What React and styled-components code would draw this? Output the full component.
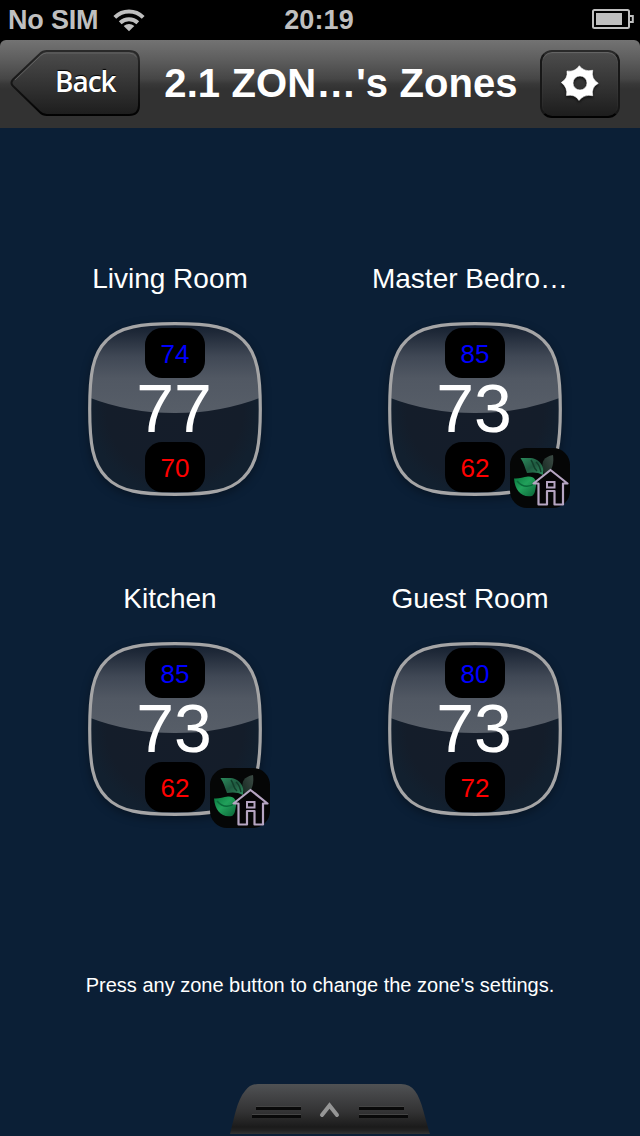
import React from 'react';
import styled, { createGlobalStyle } from 'styled-components';

const zones = [
  { name: 'Living Room', cool: 74, current: 77, heat: 70 },
  { name: 'Master Bedro…', cool: 85, current: 73, heat: 62, eco: true },
  { name: 'Kitchen', cool: 85, current: 73, heat: 62, eco: true },
  { name: 'Guest Room', cool: 80, current: 73, heat: 72 },
];

const TILE =
  'M87 1.7C121 1.7 142 4.5 155.5 18.5C169.5 32 172.3 53 172.3 87C172.3 121 169.5 142 155.5 155.5C142 169.5 121 172.3 87 172.3C53 172.3 32 169.5 18.5 155.5C4.5 142 1.7 121 1.7 87C1.7 53 4.5 32 18.5 18.5C32 4.5 53 1.7 87 1.7Z';

const WifiIcon = () => (
  <svg width="32" height="24" viewBox="0 0 32 24" fill="none" stroke="#bfbfbf" strokeWidth="4">
    <path d="M1.8 9.4C9.8 1.6 22.2 1.6 30.2 9.4" />
    <path d="M7.2 14.8C12.2 10.2 19.8 10.2 24.8 14.8" />
    <path d="M16 23.2L10.7 18C13.8 15.2 18.2 15.2 21.3 18Z" fill="#bfbfbf" stroke="none" />
  </svg>
);

const BatteryIcon = () => (
  <svg width="42" height="20" viewBox="0 0 42 20" fill="none" stroke="#bfbfbf" strokeWidth="2">
    <rect x="1" y="1" width="36" height="18" rx="1.5" />
    <path d="M38 7h2.8v6H38" />
    <rect x="4" y="4" width="26" height="12" fill="#bfbfbf" stroke="none" />
  </svg>
);

const BackShape = () => (
  <svg width="131" height="66" viewBox="0 0 132 66" preserveAspectRatio="none" fill="none">
    <defs>
      <linearGradient id="backFill" x1="0" y1="0" x2="0" y2="1">
        <stop offset="0" stopColor="#4c4c4c" />
        <stop offset="1" stopColor="#1d1d1d" />
      </linearGradient>
      <linearGradient id="backEdge" x1="0" y1="0" x2="0" y2="1">
        <stop offset="0" stopColor="#292929" />
        <stop offset="1" stopColor="#020202" />
      </linearGradient>
    </defs>
    <path
      d="M38 1H121Q131 1 131 11V55Q131 65 121 65H38Q34 65 31 62L4 36Q1 33 4 29.500L31 4Q34 1 38 1Z"
      fill="url(#backFill)"
      stroke="url(#backEdge)"
      strokeWidth="2"
    />
    <path d="M6 30L32 5.500Q35 3 38 3H121Q126 3 128.500 7" stroke="#707070" strokeOpacity=".7" />
  </svg>
);

const GearIcon = () => (
  <svg width="40" height="40" viewBox="-20 -20 40 40">
    <path
      d="M-.7 -17.300Q4 -10.800 12.700 -12.700Q10.800 -4.300 18.300 .3Q10.800 4.500 12.700 12.700Q4 11 -1 17.500Q-5 10.800 -13.500 12.500Q-12 4.500 -18.700 -.5Q-12 -4.500 -13 -12Q-5 -10.800 -.7 -17.300ZM0 -7A7 7 0 1 0 0 7A7 7 0 1 0 0 -7Z"
      fill="#fff"
      stroke="#fff"
      strokeWidth=".6"
      strokeLinejoin="round"
      fillRule="evenodd"
    />
  </svg>
);

const TileGlass = () => (
  <Glass viewBox="0 0 174 174">
    <defs>
      <clipPath id="tileClip">
        <path d={TILE} />
      </clipPath>
      <linearGradient id="gloss" x1="0" y1="0" x2="0" y2="1">
        <stop offset="0" stopColor="#121d2d" />
        <stop offset=".12" stopColor="#1f2938" />
        <stop offset=".38" stopColor="#404855" />
        <stop offset=".62" stopColor="#515863" />
        <stop offset="1" stopColor="#575e68" />
      </linearGradient>
      <radialGradient id="base">
        <stop offset="0" stopColor="#151d2a" />
        <stop offset=".8" stopColor="#141d2a" />
        <stop offset="1" stopColor="#12202f" />
      </radialGradient>
    </defs>
    <path d={TILE} fill="url(#base)" />
    <path d="M0 0H174V75Q133 91 87 91Q41 91 0 75Z" fill="url(#gloss)" clipPath="url(#tileClip)" />
    <path d={TILE} fill="none" stroke="#a5a5a6" strokeWidth="3.2" />
  </Glass>
);

const EcoIcon = () => (
  <svg width="60" height="60" viewBox="0 0 60 60">
    <defs>
      <linearGradient id="leafTop" x1="0" y1="0" x2="1" y2="1">
        <stop offset="0" stopColor="#2a8a5b" />
        <stop offset=".5" stopColor="#1f5940" />
        <stop offset="1" stopColor="#2f8a5d" />
      </linearGradient>
      <linearGradient id="leafLow" x1="0" y1="0" x2="1" y2="1">
        <stop offset="0" stopColor="#087a3e" />
        <stop offset=".45" stopColor="#22a15b" />
        <stop offset="1" stopColor="#0b6337" />
      </linearGradient>
      <linearGradient id="leafBack" x1="0" y1="1" x2="1" y2="0">
        <stop offset="0" stopColor="#14271f" />
        <stop offset="1" stopColor="#3c4b45" />
      </linearGradient>
    </defs>
    <path d="M43 7C34 9 31 13 33 22L36 28C43 22 44 14 43 7Z" fill="url(#leafBack)" />
    <path d="M10.500 10C17 10.500 22 9 27 12C33 16 34 21 33 27C28 24 22 24 17 25C15 20 14 15 10.500 10Z" fill="url(#leafTop)" />
    <path d="M21 12C24 16 23 20 27 23M26 14C30 17 30 21 31 24" fill="none" stroke="#123d2a" strokeWidth="1.500" />
    <path d="M4 30.500C9 31 13 29 18 28.500C24 28 27 32 26 38C25 43 25 46 22 48C12 50 5 43 4 30.500Z" fill="url(#leafLow)" />
    <path d="M7 33C13 40 20 39 26 35" fill="none" stroke="#0a6a3a" strokeWidth="1.500" />
    <path
      d="M40.500 22L57.500 35.500H53V56.500H44.500V43H37V56.500H28.500V35.500H23.500Z"
      fill="#050406"
      stroke="#b6a5c2"
      strokeWidth="2.200"
      strokeLinejoin="round"
    />
    <rect x="37" y="34" width="7.500" height="5.500" fill="#050406" stroke="#b6a5c2" strokeWidth="2" />
  </svg>
);

const DrawerHandle = () => (
  <svg width="200" height="50" viewBox="0 0 200 50" fill="none">
    <defs>
      <linearGradient id="handle" x1="0" y1="0" x2="0" y2="1">
        <stop offset="0" stopColor="#505254" />
        <stop offset=".2" stopColor="#454648" />
        <stop offset=".55" stopColor="#333334" />
        <stop offset=".86" stopColor="#1b1b1b" />
        <stop offset=".93" stopColor="#222" />
        <stop offset="1" stopColor="#333" />
      </linearGradient>
    </defs>
    <path d="M0 50C4 35 7 16 15 7Q20 0 28 0H171Q180 0 185 7C192 16 195 35 200 50Z" fill="url(#handle)" />
    <path d="M26 24.500H71M22 32.500H71M129 24.500H174M129 32.500H178" stroke="#090909" strokeWidth="3" />
    <path d="M26 22.500H71M22 30.500H71M129 22.500H174M129 30.500H178" stroke="#454545" />
    <path d="M92 31L99.500 21.500L107 31" stroke="#969696" strokeWidth="4" strokeLinecap="round" />
  </svg>
);

const Zone = ({ name, cool, current, heat, eco }) => (
  <ZoneWrap>
    <ZoneName>{name}</ZoneName>
    <Tile>
      <TileGlass />
      <Setpoint color="#0000ff">{cool}</Setpoint>
      <Current>{current}</Current>
      <Setpoint color="#ff0000">{heat}</Setpoint>
      {eco && (
        <EcoBadge>
          <EcoIcon />
        </EcoBadge>
      )}
    </Tile>
  </ZoneWrap>
);

const App = () => (
  <Screen>
    <GlobalStyle />
    <StatusBar>
      <Carrier>
        No SIM
        <WifiIcon />
      </Carrier>
      <Time>20:19</Time>
      <Battery>
        <BatteryIcon />
      </Battery>
    </StatusBar>
    <NavWrap>
      <NavBar>
        <BackButton>
          <BackShape />
          <BackLabel>Back</BackLabel>
        </BackButton>
        <Title>2.1 ZON…'s Zones</Title>
        <SettingsButton aria-label="Settings">
          <GearIcon />
        </SettingsButton>
      </NavBar>
    </NavWrap>
    <Zones>
      {zones.map(zone => (
        <Zone key={zone.name} {...zone} />
      ))}
    </Zones>
    <Hint>Press any zone button to change the zone's settings.</Hint>
    <Drawer>
      <DrawerHandle />
    </Drawer>
  </Screen>
);

const GlobalStyle = createGlobalStyle`
  * {
    box-sizing: border-box;
  }
  body {
    margin: 0;
    background: #0b1f36;
  }
  svg {
    display: block;
  }
`;

const Screen = styled.div`
  display: flex;
  flex-direction: column;
  width: 640px;
  height: 1136px;
  overflow: hidden;
  background: #0b1f36;
  color: #fff;
  font-family: 'Liberation Sans', Arial, sans-serif;
`;

const StatusBar = styled.div`
  display: grid;
  grid-template-columns: 1fr auto 1fr;
  align-items: center;
  height: 40px;
  padding: 0 6px 0 8px;
  background: #000;
  color: #bfbfbf;
  font-size: 27px;
  font-weight: bold;
`;

const Carrier = styled.div`
  display: flex;
  align-items: center;
  gap: 15px;
  letter-spacing: -0.2px;
`;

const Time = styled.div`
  margin-right: 4px;
  letter-spacing: 0.1px;
`;

const Battery = styled.div`
  display: flex;
  justify-content: flex-end;
  padding-bottom: 2px;
`;

const NavWrap = styled.div`
  background: #000;
`;

const NavBar = styled.header`
  display: flex;
  align-items: flex-start;
  justify-content: space-between;
  height: 88px;
  padding: 10px 20px 0 9px;
  border-radius: 6px 6px 0 0;
  background: linear-gradient(#737373 0%, #606060 20%, #464646 44%, #383838 50%, #323232 56%, #323232 100%);
`;

const BackButton = styled.button`
  display: grid;
  padding: 0;
  border: 0;
  background: none;
  color: #fff;
  > * {
    grid-area: 1 / 1;
  }
`;

const BackLabel = styled.span`
  padding: 11px 0 0 46px;
  font-family: 'Open Sans', sans-serif;
  font-size: 28px;
  font-weight: 600;
  line-height: 40px;
  letter-spacing: -1px;
  text-align: left;
  text-shadow: 0 -1px 1px #000;
`;

const Title = styled.h1`
  margin: 0;
  padding-left: 2px;
  font-size: 40px;
  line-height: 67px;
  letter-spacing: 0.1px;
  white-space: nowrap;
`;

const SettingsButton = styled.button`
  display: flex;
  align-items: center;
  justify-content: center;
  width: 80px;
  height: 68px;
  padding: 0 0 2px;
  border: 2px solid #111;
  border-color: #292929 #171717 #020202;
  border-radius: 12px;
  background: linear-gradient(#4c4c4c, #1d1d1d);
  box-shadow: inset 0 1px 1px #686868;
  svg {
    filter: drop-shadow(0 2px 1px #111);
  }
`;

const Zones = styled.main`
  display: grid;
  grid-template-columns: 300px 300px;
  grid-auto-rows: 320px;
  padding: 134px 0 0 25px;
`;

const ZoneWrap = styled.div`
  display: flex;
  flex-direction: column;
  align-items: center;
`;

const ZoneName = styled.div`
  margin-right: 10px;
  height: 59px;
  font-size: 28px;
  line-height: 34px;
`;

const Tile = styled.div`
  position: relative;
  display: flex;
  flex-direction: column;
  align-items: center;
  width: 174px;
  height: 174px;
  padding-top: 7px;
`;

const Glass = styled.svg`
  position: absolute;
  top: 0.5px;
  left: 0;
  width: 174px;
  height: 174px;
  overflow: visible;
  filter: drop-shadow(0 3px 5px rgba(0, 0, 0, 0.35));
`;

const Setpoint = styled.div`
  position: relative;
  width: 60px;
  height: 50px;
  border-radius: 17px;
  background: #000;
  color: ${props => props.color};
  font-size: 26px;
  line-height: 53px;
  text-align: center;
`;

const Current = styled.div`
  position: relative;
  height: 64px;
  margin-right: 2px;
  font-size: 68px;
  line-height: 60px;
`;

const EcoBadge = styled.div`
  position: absolute;
  right: -8px;
  bottom: -13px;
  border-radius: 17px;
  background: #050606;
`;

const Hint = styled.p`
  margin: 70px 0 0;
  font-size: 20px;
  line-height: 26px;
  text-align: center;
`;

const Drawer = styled.footer`
  display: flex;
  justify-content: center;
  margin-top: auto;
  padding: 0 0 2px 20px;
`;

export default App;
